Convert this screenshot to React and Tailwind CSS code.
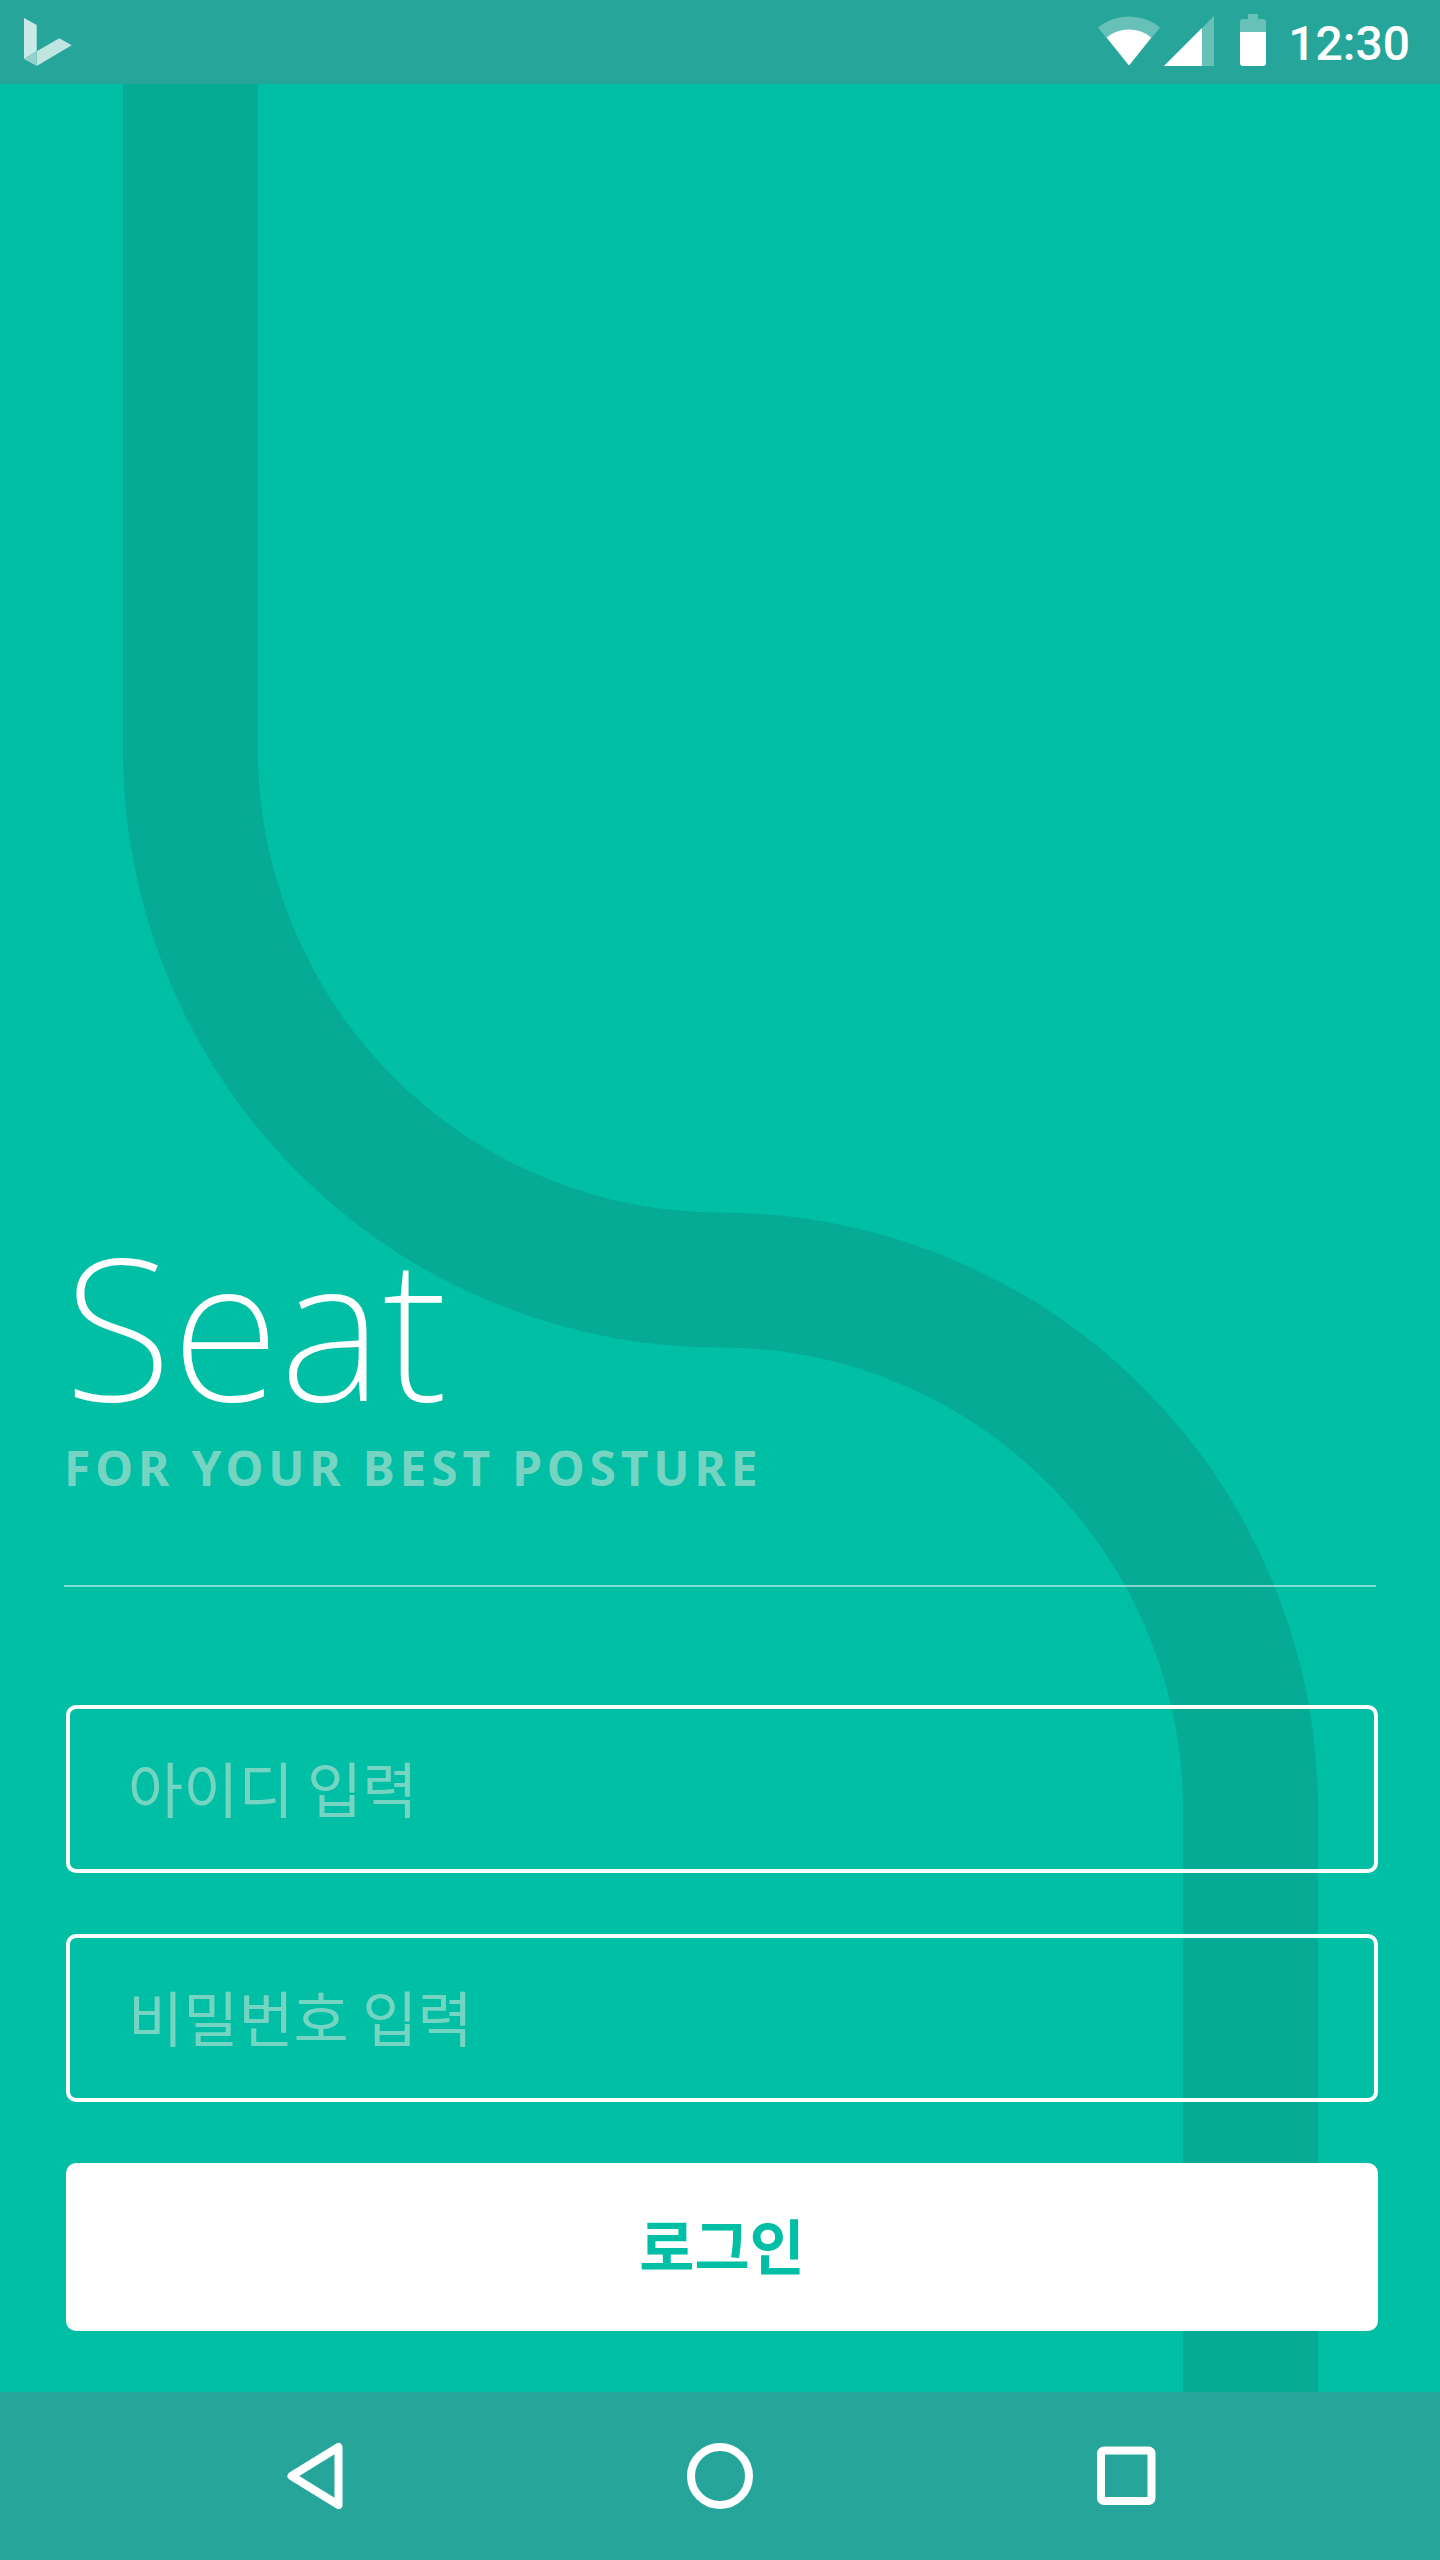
function Backdrop() {
  return (
    <svg
      className="absolute inset-0 -z-10 h-full w-full"
      viewBox="0 0 1440 2560"
      preserveAspectRatio="xMidYMid slice"
      fill="none"
      aria-hidden="true"
    >
      <path
        d="M190.500 0V750A530 530 0 0 0 720.500 1280A530 530 0 0 1 1250.500 1810V2560"
        stroke="#05ab95"
        strokeWidth="135"
      />
    </svg>
  );
}

function AppMark() {
  return (
    <svg className="h-16 w-12" viewBox="0 0 48 64" aria-hidden="true">
      <path d="M0 6L12.700 13V39.300L0 47Z" fill="#c9e9e6" />
      <path d="M12.700 39.300L35.300 26.300L47.700 33.300L12.700 54Z" fill="#bfe5e0" />
      <path d="M0 47L12.700 39.300V54Z" fill="#93d1cb" />
    </svg>
  );
}

function WifiIcon() {
  return (
    <svg className="h-16 w-[62px]" viewBox="0 0 62 64" fill="#fff" aria-hidden="true">
      <path d="M0 15.500A49 49 0 0 1 62 15.500L31 53.500Z" opacity="0.3" />
      <path d="M8.700 25.400A35.500 35.500 0 0 1 53.300 25.400L31 53.500Z" />
    </svg>
  );
}

function SignalIcon() {
  return (
    <svg className="h-16 w-[50px]" viewBox="0 0 50 64" fill="#fff" aria-hidden="true">
      <path d="M0 54L50 4V54Z" opacity="0.3" />
      <path d="M0 54L38 16V54Z" />
    </svg>
  );
}

function BatteryIcon() {
  return (
    <svg className="h-16 w-[26px]" viewBox="0 0 26 64" fill="#fff" aria-hidden="true">
      <path d="M8 2H18V7H23Q26 7 26 10V20H0V10Q0 7 3 7H8Z" opacity="0.3" />
      <path d="M0 20H26V51Q26 54 23 54H3Q0 54 0 51Z" />
    </svg>
  );
}

function StatusBar() {
  return (
    <header className="flex h-[84px] items-center justify-between bg-[#26a69a] pt-1 pl-6 pr-[30px] text-white">
      <AppMark />
      <div className="flex items-center">
        <WifiIcon />
        <div className="ml-1">
          <SignalIcon />
        </div>
        <div className="ml-[26px]">
          <BatteryIcon />
        </div>
        <time className="ml-[22px] font-['Roboto',sans-serif] text-5xl leading-[56px] font-medium">12:30</time>
      </div>
    </header>
  );
}

function Field({ label, type, name }) {
  return (
    <input
      type={type}
      name={name}
      aria-label={label}
      placeholder={label}
      className="h-[168px] w-full rounded-[10px] border-4 border-white bg-transparent px-[58px] pb-1.5 text-[60px] font-normal text-white outline-none placeholder:text-[#76d4c3]"
    />
  );
}

function NavButton({ label, children }) {
  return (
    <button type="button" aria-label={label} className="flex items-center justify-center">
      <svg
        className="size-24"
        viewBox="0 0 96 96"
        fill="none"
        stroke="#fff"
        strokeWidth="8"
        strokeLinejoin="round"
        aria-hidden="true"
      >
        {children}
      </svg>
    </button>
  );
}

export default function App() {
  return (
    <div className="relative isolate flex min-h-screen flex-col bg-[#00bfa5] font-['Noto_Sans_CJK_KR',sans-serif]">
      <Backdrop />
      <StatusBar />

      <main className="flex flex-1 flex-col justify-end pb-[61px]">
        <div className="px-16 font-['Noto_Sans',sans-serif]">
          <h1 className="text-[198px] leading-[196px] font-extralight text-white">Seat</h1>
          <p className="mt-3.5 text-5xl leading-[64px] font-bold tracking-widest text-[#76d4c3]">
            FOR YOUR BEST POSTURE
          </p>
          <hr className="mt-[85px] border-0 border-t-2 border-white/50" />
        </div>

        <form className="mt-[118px] flex flex-col gap-[61px] pr-[62px] pl-[66px]" onSubmit={(e) => e.preventDefault()}>
          <Field label="아이디 입력" type="text" name="userId" />
          <Field label="비밀번호 입력" type="password" name="password" />
          <button
            type="submit"
            className="h-[168px] w-full rounded-[10px] bg-white pb-1.5 text-[60px] font-semibold text-[#00bfa5]"
          >
            로그인
          </button>
        </form>
      </main>

      <nav className="grid h-[168px] grid-cols-3 bg-[#26a69a] px-28">
        <NavButton label="뒤로">
          <path d="M24.500 48L71.500 19V77Z" />
        </NavButton>
        <NavButton label="홈">
          <circle cx="48" cy="48" r="29" />
        </NavButton>
        <NavButton label="최근 앱">
          <rect x="24" y="22.500" width="50.500" height="50.500" rx="3" />
        </NavButton>
      </nav>
    </div>
  );
}
